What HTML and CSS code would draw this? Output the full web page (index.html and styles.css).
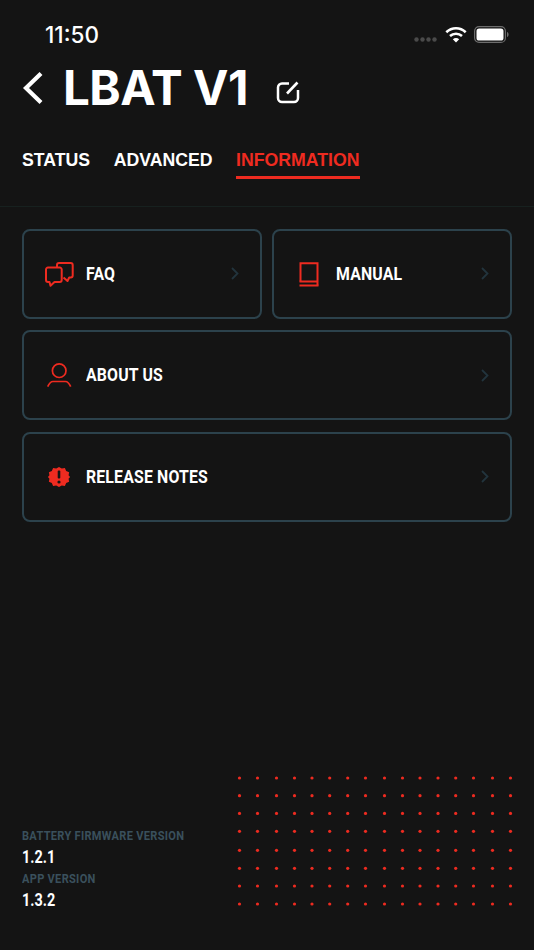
FILE: index.html
```html
<!DOCTYPE html>
<html lang="en">
<head>
<meta charset="utf-8">
<title>LBAT V1</title>
<link rel="stylesheet" href="styles.css">
</head>
<body>
<div class="screen">
  <div class="status">
    <span class="time">11:50</span>
    <div class="status-icons">
      <svg class="signal" width="24" height="5" viewBox="0 0 24 5"><g fill="#4a4a4a"><circle cx="2.5" cy="2.5" r="2.2"/><circle cx="8.5" cy="2.5" r="2.2"/><circle cx="14.5" cy="2.5" r="2.2"/><circle cx="20.5" cy="2.5" r="2.2"/></g></svg>
      <svg class="wifi" width="22" height="17" viewBox="0 0 22 17"><g fill="none" stroke="#fff" stroke-width="2.6"><path d="M1.3 6.2C6.8 1 15.2 1 20.7 6.2"/><path d="M5 10C8.400 6.900 13.600 6.900 17 10"/></g><path d="M7.800 13.200C9.700 11.600 12.300 11.600 14.200 13.200L11 16.500Z" fill="#fff"/></svg>
      <svg class="battery" width="35" height="17" viewBox="0 0 35 17"><rect x=".6" y=".6" width="30.800" height="15.800" rx="4.500" fill="none" stroke="#6d6d6d" stroke-width="1.200"/><rect x="2.500" y="2.500" width="27" height="12" rx="2.600" fill="#fff"/><path d="M33 6v5c1-.3 1.600-1.300 1.600-2.500S34 6.300 33 6Z" fill="#6d6d6d"/></svg>
    </div>
  </div>

  <header class="title-row">
    <svg class="back" width="22" height="34" viewBox="0 0 22 34"><path d="M19 2.500 4 17l15 14.500" fill="none" stroke="#fff" stroke-width="4.200"/></svg>
    <h1>LBAT V1</h1>
    <svg class="edit" width="24" height="24" viewBox="0 0 24 24"><path d="M13 3.500H6a4 4 0 0 0-4 4V18a4 4 0 0 0 4 4h12a4 4 0 0 0 4-4V10" fill="none" stroke="#fff" stroke-width="2.500"/><path d="M11 13.500 21.500 2.500" fill="none" stroke="#fff" stroke-width="2.600"/></svg>
  </header>

  <nav class="tabs">
    <a class="tab">STATUS</a>
    <a class="tab">ADVANCED</a>
    <a class="tab active">INFORMATION</a>
  </nav>

  <main class="cards">
    <div class="card-row">
      <a class="card">
        <svg class="icon" width="30" height="26" viewBox="0 0 30 26"><g fill="none" stroke="#ee2b20" stroke-width="2" stroke-linejoin="round"><path d="M3 6.500h11.700a2 2 0 0 1 2 2V19a2 2 0 0 1-2 2H9.500l-4 3.700-1-3.700H3a2 2 0 0 1-2-2V8.500a2 2 0 0 1 2-2Z"/><path d="M12 6.500V4a2 2 0 0 1 2-2h11.700a2 2 0 0 1 2 2v10.500a2 2 0 0 1-2 2h-1.500l-1.700 3.500-4-3.500"/></g></svg>
        <span class="label">FAQ</span>
        <svg class="chev" width="8" height="13" viewBox="0 0 8 13"><path d="m1 1 5.500 5.500L1 12" fill="none" stroke="#22343d" stroke-width="1.800"/></svg>
      </a>
      <a class="card">
        <svg class="icon" width="30" height="26" viewBox="0 0 30 26"><g fill="none" stroke="#ee2b20" stroke-width="2"><path d="M5.500 20.500V2.200h17v22.300"/><path d="M4.500 20.500h18"/><path d="M4.500 24.500h19"/></g></svg>
        <span class="label">MANUAL</span>
        <svg class="chev" width="8" height="13" viewBox="0 0 8 13"><path d="m1 1 5.500 5.500L1 12" fill="none" stroke="#22343d" stroke-width="1.800"/></svg>
      </a>
    </div>
    <a class="card">
      <svg class="icon" width="30" height="26" viewBox="0 0 30 26"><g fill="none" stroke="#ee2b20" stroke-width="1.700"><circle cx="14.200" cy="8.700" r="6.800"/><path d="M2.700 24.700c1.300-3 3-5.200 5.300-5.200h12.400c2.300 0 4 2.200 5.300 5.200"/></g></svg>
      <span class="label">ABOUT US</span>
      <svg class="chev" width="8" height="13" viewBox="0 0 8 13"><path d="m1 1 5.500 5.500L1 12" fill="none" stroke="#22343d" stroke-width="1.800"/></svg>
    </a>
    <a class="card">
      <svg class="icon" width="30" height="26" viewBox="1 0 30 26"><path transform="translate(15 13) scale(.92) translate(-15 -13)" d="m15 2 3 1.800 3.400-.6 1.400 3.200 3.200 1.400-.6 3.400L27 13l-1.600 1.800.6 3.400-3.200 1.400-1.400 3.200-3.400-.6L15 24l-3-1.800-3.400.6-1.400-3.200L4 18.200l.6-3.400L3 13l1.600-1.800L4 7.800l3.200-1.400 1.400-3.200 3.400.6Z" fill="#ee2b20"/><rect x="13.700" y="6.500" width="2.600" height="8" rx="1" fill="#141414"/><circle cx="15" cy="18" r="1.600" fill="#141414"/></svg>
      <span class="label">RELEASE NOTES</span>
      <svg class="chev" width="8" height="13" viewBox="0 0 8 13"><path d="m1 1 5.500 5.500L1 12" fill="none" stroke="#22343d" stroke-width="1.800"/></svg>
    </a>
  </main>

  <footer class="versions">
    <div class="v-label">BATTERY FIRMWARE VERSION</div>
    <div class="v-num">1.2.1</div>
    <div class="v-label">APP VERSION</div>
    <div class="v-num">1.3.2</div>
  </footer>

  <svg class="dots" width="280" height="134" viewBox="237 775 280 134">
    <defs>
      <g id="r" fill="#ee2b20">
        <circle cx="239.500" r="1.600"/><circle cx="257.500" r="1.600"/><circle cx="276.500" r="1.600"/><circle cx="294.500" r="1.600"/>
        <circle cx="312" r="1.600"/><circle cx="329.700" r="1.600"/><circle cx="347.700" r="1.600"/><circle cx="365.500" r="1.600"/>
        <circle cx="384.500" r="1.600"/><circle cx="402.500" r="1.600"/><circle cx="420" r="1.600"/><circle cx="438" r="1.600"/>
        <circle cx="455.700" r="1.600"/><circle cx="473.500" r="1.600"/><circle cx="492.500" r="1.600"/><circle cx="510.500" r="1.600"/>
      </g>
    </defs>
    <use href="#r" y="778"/><use href="#r" y="795.700"/><use href="#r" y="813.400"/><use href="#r" y="831.300"/>
    <use href="#r" y="850.300"/><use href="#r" y="868.300"/><use href="#r" y="886"/><use href="#r" y="904"/>
  </svg>
</div>
</body>
</html>
```
FILE: styles.css
```css
* { box-sizing: border-box; }
html, body { margin: 0; padding: 0; background: #141414; }
.screen {
  position: relative;
  width: 534px;
  height: 950px;
  overflow: hidden;
  background: #141414;
  color: #fff;
  display: flex;
  flex-direction: column;
  font-family: "Roboto", "Liberation Sans", sans-serif;
}
.status {
  height: 60px;
  padding: 22px 25px 0 45px;
  display: flex;
  justify-content: space-between;
  align-items: flex-start;
}
.time { font: 500 22.500px/26px "Inter", sans-serif; }
.status-icons { display: flex; align-items: center; gap: 7px; height: 24px; }
.signal { margin-top: 10px; }
.title-row {
  height: 56px;
  padding-left: 22px;
  display: flex;
  align-items: center;
}
.back { flex: none; }
h1 {
  margin: 0 0 0 19px;
  font: 700 47.500px/56px "Inter", sans-serif;
  letter-spacing: -.5px;
}
.edit { margin: 7px 0 0 28px; }
.tabs {
  height: 91px;
  padding: 32px 22px 0;
  display: flex;
  align-items: flex-start;
  gap: 23.500px;
  border-bottom: 1px solid #17211f;
}
.tab {
  height: 30.500px;
  font: 700 17.700px/24px "Liberation Sans", sans-serif;
}
.tab.active {
  color: #ee2b20;
  border-bottom: 3px solid #ee2b20;
}
.cards {
  padding: 21.500px 22px 0;
  display: flex;
  flex-direction: column;
  gap: 11.500px;
}
.card-row { display: flex; gap: 10.500px; }
.card-row .card { flex: 1; }
.card {
  height: 90px;
  padding: 0 21px 0 21px;
  display: flex;
  align-items: center;
  border: 2px solid #2c424c;
  border-radius: 8px;
}
.icon { flex: none; }
.label {
  margin-left: 11px;
  flex: 1;
  font: 700 18.500px/22px "Roboto", sans-serif;
  letter-spacing: .2px;
  transform: scaleX(.855);
  transform-origin: left center;
}
.chev { flex: none; }
.versions {
  position: absolute;
  left: 22px;
  top: 826px;
}
.v-label {
  height: 20px;
  font: 700 13px/20px "Roboto", sans-serif;
  letter-spacing: .35px;
  color: #3a505c;
  transform: scaleX(.85);
  transform-origin: left center;
  white-space: nowrap;
}
.v-num {
  height: 23px;
  font: 700 19px/21px "Roboto", sans-serif;
  transform: scaleX(.76);
  transform-origin: left center;
}
.dots { position: absolute; left: 237px; top: 775px; }
```
